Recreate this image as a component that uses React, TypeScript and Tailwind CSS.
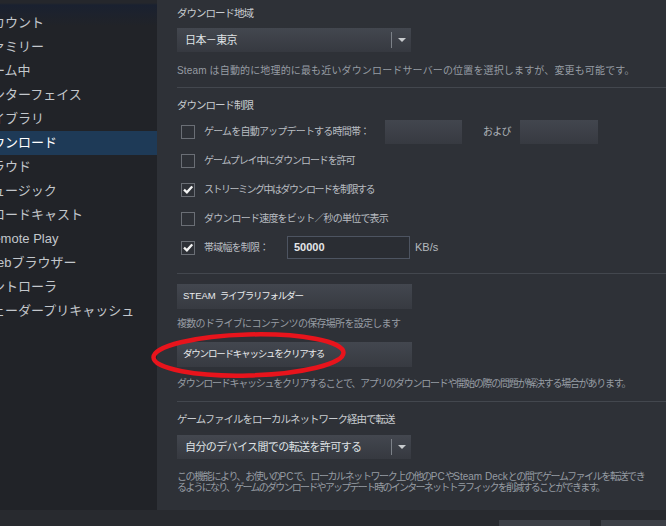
import React from "react";

const navItems = [
  { label: "アカウント", shift: "ml-[-21px]" },
  { label: "ファミリー", shift: "ml-[-21px]" },
  { label: "ゲーム中", shift: "ml-[-21px]" },
  { label: "インターフェイス", shift: "ml-[-21px]" },
  { label: "ライブラリ", shift: "ml-[-21px]" },
  { label: "ダウンロード", shift: "ml-[-21px]" },
  { label: "クラウド", shift: "ml-[-21px]" },
  { label: "ミュージック", shift: "ml-[-21px]" },
  { label: "ブロードキャスト", shift: "ml-[-21px]" },
  { label: "Remote Play", shift: "ml-[-16px]" },
  { label: "Webブラウザー", shift: "ml-[-15px]" },
  { label: "コントローラ", shift: "ml-[-21px]" },
  { label: "シェーダープリキャッシュ", shift: "ml-[-21px]" },
];

function Check({ checked }: { checked?: boolean }) {
  return (
    <div className="ml-[4px] flex h-[14px] w-[14px] shrink-0 items-center justify-center border border-[#6a6e75]">
      {checked && (
        <svg width="10" height="9" viewBox="0 0 10 9">
          <path d="M1 4.6 L3.9 7.3 L9.2 1.4" stroke="#f4f4f4" strokeWidth="2.3" fill="none" />
        </svg>
      )}
    </div>
  );
}

function Dropdown({ label }: { label: string }) {
  return (
    <div className="flex h-[24px] w-[234px] items-center bg-gradient-to-b from-[#43474f] to-[#363940] pl-[8px]">
      <span className="flex-1 text-[11px] tracking-[-0.6px] text-[#dfe2e5]">{label}</span>
      <div className="h-[16px] w-px bg-[#7c8188]" />
      <div className="flex w-[19px] justify-center">
        <svg width="8" height="4" viewBox="0 0 8 4">
          <path d="M0 0h8L4 4z" fill="#c8cbce" />
        </svg>
      </div>
    </div>
  );
}

function Button({ children }: { children: React.ReactNode }) {
  return (
    <div className="flex h-[25px] w-[235px] items-center whitespace-nowrap bg-gradient-to-b from-[#43474f] to-[#373a41] pl-[6px] text-[9.5px] tracking-[-1.2px] text-[#e9ebed]">
      {children}
    </div>
  );
}

function Divider() {
  return <div className="h-px w-full bg-[#43474e]" />;
}

export default function App() {
  return (
    <div className="relative flex h-[526px] w-[666px] flex-col overflow-hidden bg-[#282a2f] font-['Liberation_Sans','Noto_Sans_CJK_JP',sans-serif]">
      <div className="flex h-[510px]">
        {/* sidebar, window's left edge is off-screen */}
        <div className="w-[157px] shrink-0 overflow-hidden bg-[linear-gradient(to_bottom,#25272c_0px,#25272c_3px,#1a2130_5px,#212328_26px)]">
          <div className="pt-[11px]">
            {navItems.map((item) => (
              <div
                key={item.label}
                className={
                  item.label === "ダウンロード"
                    ? "flex h-[24px] items-center whitespace-nowrap bg-[#1e3a57] text-[13px] text-white"
                    : "flex h-[24px] items-center whitespace-nowrap text-[13px] text-[#c3c7cc]"
                }
              >
                <span className={item.shift}>{item.label}</span>
              </div>
            ))}
          </div>
        </div>

        {/* main */}
        <div className="flex flex-1 flex-col bg-[#2e3137] pl-[20px]">
          <div className="flex h-[28px] items-center text-[10.5px] tracking-[-1px] text-[#c8ccd0]">
            ダウンロード地域
          </div>
          <Dropdown label="日本－東京" />
          <div className="mt-[11px] flex h-[14px] items-center whitespace-nowrap text-[10px] tracking-[0.15px] text-[#969ca3]">
            Steam は自動的に地理的に最も近いダウンロードサーバーの位置を選択しますが、変更も可能です。
          </div>
          <div className="mt-[10px]">
            <Divider />
          </div>

          <div className="mt-[11px] flex h-[14px] items-center text-[10.5px] tracking-[-1px] text-[#c8ccd0]">
            ダウンロード制限
          </div>

          <div className="mt-[4px] flex flex-col text-[10px] tracking-[-0.8px] text-[#b9bdc2]">
            <div className="flex h-[29px] items-center">
              <Check />
              <span className="ml-[9px] w-[181px] whitespace-nowrap">ゲームを自動アップデートする時間帯：</span>
              <div className="h-[24px] w-[77px] bg-gradient-to-b from-[#42464e] to-[#373a41]" />
              <span className="ml-[21px] w-[37px] text-[#aeb3b9]">および</span>
              <div className="h-[24px] w-[78px] bg-gradient-to-b from-[#42464e] to-[#373a41]" />
            </div>
            <div className="flex h-[29px] items-center">
              <Check />
              <span className="ml-[9px] whitespace-nowrap tracking-[-1.1px]">ゲームプレイ中にダウンロードを許可</span>
            </div>
            <div className="flex h-[29px] items-center">
              <Check checked />
              <span className="ml-[9px] whitespace-nowrap tracking-[-1.5px]">ストリーミング中はダウンロードを制限する</span>
            </div>
            <div className="flex h-[29px] items-center">
              <Check />
              <span className="ml-[9px] whitespace-nowrap">ダウンロード速度をビット／秒の単位で表示</span>
            </div>
            <div className="flex h-[29px] items-center">
              <Check checked />
              <span className="ml-[9px] w-[83px] whitespace-nowrap">帯域幅を制限：</span>
              <div className="flex h-[23px] w-[123px] items-center border border-[#4d5461] bg-[#2a2d33] pl-[6px] text-[11px] font-bold tracking-normal text-[#e4e6e8]">
                50000
              </div>
              <span className="ml-[5px] text-[11px] tracking-normal text-[#b4b9be]">KB/s</span>
            </div>
          </div>

          <div className="mt-[11px]">
            <Divider />
          </div>

          <div className="mt-[10px]">
            <Button>
              <span className="mr-[4px] tracking-normal">STEAM</span>ライブラリフォルダー
            </Button>
          </div>
          <div className="mt-[7px] flex h-[14px] items-center whitespace-nowrap text-[10px] tracking-[-0.7px] text-[#969ca3]">
            複数のドライブにコンテンツの保存場所を設定します
          </div>
          <div className="mt-[12px]">
            <Button>ダウンロードキャッシュをクリアする</Button>
          </div>
          <div className="mt-[9px] flex h-[14px] items-center whitespace-nowrap text-[10px] tracking-[-1.25px] text-[#969ca3]">
            ダウンロードキャッシュをクリアすることで、アプリのダウンロードや開始の際の問題が解決する場合があります。
          </div>

          <div className="mt-[11px]">
            <Divider />
          </div>

          <div className="mt-[11px] flex h-[14px] items-center text-[10.5px] tracking-[-1px] text-[#c8ccd0]">
            ゲームファイルをローカルネットワーク経由で転送
          </div>
          <div className="mt-[8px]">
            <Dropdown label="自分のデバイス間での転送を許可する" />
          </div>
          <div className="mt-[12px] whitespace-nowrap text-[10px] leading-[11px] text-[#969ca3]">
            <div className="tracking-[-1.4px]">
              この機能により、お使いの<span className="tracking-normal">PC</span>で、ローカルネットワーク上の他の
              <span className="tracking-normal">PC</span>や<span className="tracking-normal">Steam Deck</span>
              との間でゲームファイルを転送でき
            </div>
            <div className="tracking-[-1.75px]">
              るようになり、ゲームのダウンロードやアップデート時のインターネットトラフィックを削減することができます。
            </div>
          </div>
        </div>
      </div>

      {/* bottom bar */}
      <div className="flex h-[16px] justify-end gap-[11px] pt-[10px]">
        <div className="h-[6px] w-[91px] bg-[#3c3f46]" />
        <div className="mr-[-26px] h-[6px] w-[91px] bg-[#3c3f46]" />
      </div>

      {/* hand-drawn annotation */}
      <svg className="pointer-events-none absolute left-0 top-0" width="666" height="526" viewBox="0 0 666 526">
        <ellipse
          cx="248.5"
          cy="355"
          rx="95"
          ry="20.5"
          fill="none"
          stroke="#e8141c"
          strokeWidth="4.5"
          transform="rotate(-1.5 248.5 355)"
        />
      </svg>
    </div>
  );
}
